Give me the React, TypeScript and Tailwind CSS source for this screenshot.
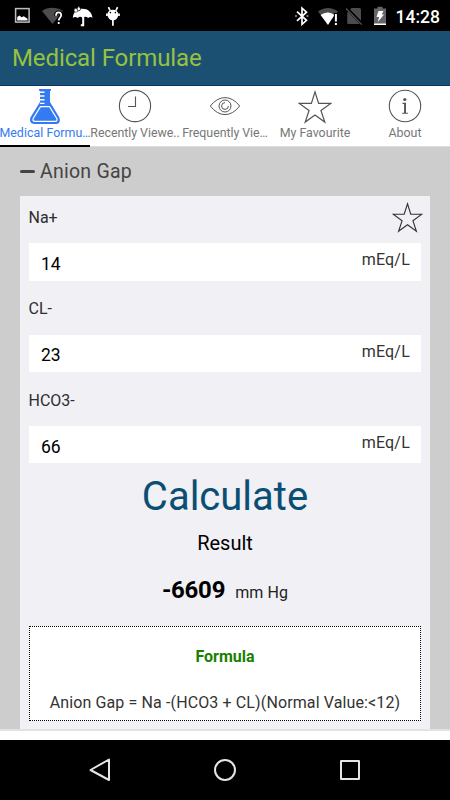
import React from "react";

const STAR = "M16 1.8 L19.4 12.6 H30.8 L21.6 19.3 L25.2 30.2 L16 23.5 L6.8 30.2 L10.4 19.3 L1.2 12.6 H12.6 Z";

function StatusBar() {
  return (
    <div className="flex h-[31px] shrink-0 items-center bg-black">
      <svg className="ml-[14px] h-[17px] w-[17px]" viewBox="0 0 17 17">
        <rect x="1.6" y="1.6" width="13.5" height="13.5" fill="none" stroke="#bdbdbd" strokeWidth="1.5" />
        <path d="M3.2 13.5V10L5.5 8.5L7.5 10.2L9.8 9.3L13.5 11.7V13.5Z" fill="#fff" />
      </svg>
      <svg className="ml-[10px] mt-[1px] h-[20px] w-[23px]" viewBox="0 0 23 20">
        <path d="M1 5C7 .8 15 .8 22 5L11.5 18Z" fill="#4c4c4c" />
        <path d="M15 9.7C15 5.3 20.4 5.5 20.2 9.2C20 11.6 17.7 12 17.7 14.5" fill="none" stroke="#000" strokeWidth="4" />
        <path d="M15 9.7C15 5.3 20.4 5.5 20.2 9.2C20 11.6 17.7 12 17.7 14.5M17.7 16V18" fill="none" stroke="#fff" strokeWidth="1.8" />
      </svg>
      <svg className="ml-[8px] h-[22px] w-[22px]" viewBox="0 0 22 22">
        <path d="M.8 13C1.2 6.2 6 3.7 10.5 3.7C15.8 3.7 20 7 20.5 13Q18.7 10.8 16.2 13Q13.4 10.7 10.7 13Q8 10.7 5.6 13Q3 10.8 .8 13Z" fill="#fff" />
        <path d="M11.2 11.5V20.2H8.8" fill="none" stroke="#fff" strokeWidth="2" />
        <circle cx="4" cy="5.2" r="2" fill="#fff" stroke="#000" strokeWidth=".5" />
        <path d="M6.8 .8L8.5 3.8Q8.5 5.8 6.8 5.8Q5 5.8 5 3.8Z" fill="#fff" stroke="#000" strokeWidth=".7" />
      </svg>
      <svg className="ml-[11px] h-[20px] w-[16px]" viewBox="0 0 16 20">
        <path d="M2.4 8A5.6 5.2 0 0 1 13.4 8V9Q12.5 14 7.9 14.6Q3.3 14 2.4 9Z" fill="#fff" />
        <path d="M3.5 1.2L5 4.5M12.5 1.2L11 4.5M1.9 7.5V10M14 7.5V10M7.9 14V19.8" stroke="#fff" strokeWidth="1.7" />
        <circle cx="5.4" cy="6.6" r=".8" /><circle cx="10.4" cy="6.6" r=".8" />
      </svg>
      <svg className="ml-auto h-[20px] w-[14px]" viewBox="0 0 14 20">
        <path d="M2 5.7L11.5 14.3L7 18.3V2.1L11.5 6.2L2 14.8" fill="none" stroke="#fff" strokeWidth="1.7" />
        <path d="M0 10H2M11.5 10H13.5" stroke="#999" strokeWidth="1.3" />
      </svg>
      <svg className="ml-[7.5px] h-[20px] w-[22px]" viewBox="0 0 22 20">
        <path d="M1 5.6C7 .9 15 .9 21 5.6L11 18Z" fill="#4c4c4c" />
        <path d="M3.6 9C8 5.6 14 5.6 17.3 9L11 19Z" fill="#fff" />
        <path d="M18.9 7V20" stroke="#000" strokeWidth="4" />
        <path d="M18.9 8V15.5M18.9 17V19" stroke="#fff" strokeWidth="2" />
      </svg>
      <svg className="ml-[7px] h-[20px] w-[17px]" viewBox="0 0 17 20">
        <path d="M1.2 6.5L5.5 2H13.5Q15 2 15 3.5V16.8Q15 18 13.5 18H2.5Q1.2 18 1.2 16.8Z" fill="#4c4c4c" />
        <path d="M.8 2.4L16.5 18.4" stroke="#000" strokeWidth="3.2" />
        <path d="M0 2.4L15.8 18.6" stroke="#555" strokeWidth="1.2" />
      </svg>
      <svg className="ml-[10px] h-[20px] w-[14px]" viewBox="0 0 14 20">
        <path d="M1 2.5H4.5V.8H9.5V2.5H13V19H1Z" fill="#666" />
        <path d="M1 17.5H13V19H1Z" fill="#fff" />
        <path d="M5.5 5H10.5L8.7 8.5H11L4.8 16L6.1 11H3.5Z" fill="#fff" />
      </svg>
      <span className="ml-[9px] mr-[10px] pt-[2px] text-[17.5px] font-medium leading-5 text-white">14:28</span>
    </div>
  );
}

function FlaskIcon() {
  return (
    <svg className="h-9 w-8" viewBox="0 0 32 36">
      <path d="M10 1H22V2.8H21V14L30.4 29.5Q32.2 35.5 27 36H5Q-.2 35.5 1.4 29.5L11 14V2.8H10Z" fill="#347bf3" />
      <path d="M11 4.3H15.5M11 8H15.5M11 11.7H15.5M11 15.4H15.5" stroke="#fff" strokeWidth="1.4" />
      <path d="M11.5 18.6H20.5L27.8 30.5Q28.8 33.3 26 33.3H6Q3.2 33.3 4.2 30.5Z" fill="none" stroke="#fff" strokeWidth="1.2" />
    </svg>
  );
}

function ClockIcon() {
  return (
    <svg className="h-9 w-9" viewBox="0 0 36 36" fill="none" stroke="#555" strokeWidth="1.1">
      <circle cx="18" cy="18" r="15.6" />
      <path d="M18.5 8.5V18.5H11" stroke="#555" />
    </svg>
  );
}

function EyeIcon() {
  return (
    <svg className="h-9 w-9" viewBox="0 0 36 36" fill="none" stroke="#555" strokeWidth="1">
      <path d="M3.3 18Q10 9.6 18 9.6T32.7 18Q26 26.6 18 26.6T3.3 18Z" />
      <circle cx="18" cy="18" r="6" />
      <path d="M18 14.6A3.4 3.4 0 1 0 21.4 18" />
    </svg>
  );
}

function InfoIcon() {
  return (
    <svg className="h-9 w-9" viewBox="0 0 36 36" fill="none" stroke="#555" strokeWidth="1.1">
      <circle cx="18" cy="18" r="15.7" />
      <circle cx="17.8" cy="11.5" r="1.6" fill="#555" stroke="none" />
      <path d="M15.5 15.4H18.3V25M15.2 25.2H20.9" />
      <path d="M18 15V25" strokeWidth="1.8" />
    </svg>
  );
}

function StarIcon({ className, color }: { className: string; color: string }) {
  return (
    <svg className={className} viewBox="0 0 32 32" fill="none" stroke={color} strokeWidth="1.15">
      <path d={STAR} />
    </svg>
  );
}

const tabs = [
  { label: "Medical Formu…", icon: <FlaskIcon />, style: "text-[#347bf3] tracking-[0.04px]" },
  { label: "Recently Viewe..", icon: <ClockIcon />, style: "text-[#777] tracking-[-0.04px]" },
  { label: "Frequently Vie…", icon: <EyeIcon />, style: "text-[#777] tracking-[-0.05px]" },
  { label: "My Favourite", icon: <StarIcon className="mt-[2px] h-[34px] w-[34px]" color="#555" />, style: "text-[#777] tracking-[0px]" },
  { label: "About", icon: <InfoIcon />, style: "text-[#777] tracking-[0px]" },
];

function Tabs() {
  return (
    <div className="grid h-[61px] shrink-0 grid-cols-5 border-b border-[#ddd] bg-white">
      {tabs.map((tab, i) => (
        <div key={tab.label} className={"flex h-[61px] min-w-0 flex-col items-center border-b-2 pt-[2px] " + (i === 0 ? "border-black" : "border-transparent")}>
          <div className="flex h-9 items-start justify-center">{tab.icon}</div>
          <span className={"whitespace-nowrap pt-[1px] text-[12.4px] leading-[16px] " + tab.style}>{tab.label}</span>
        </div>
      ))}
    </div>
  );
}

function Field({ label, value, star }: { label: string; value: string; star?: boolean }) {
  return (
    <div className="h-[91.4px]">
      <div className="flex h-[47.3px] justify-between">
        <span className="ml-[-0.5px] pt-[11px] text-[16px] leading-[22px] text-[#2d2d2d]">{label}</span>
        {star && <StarIcon className="mr-[-1.5px] mt-[6px] h-[31px] w-[31px]" color="#333" />}
      </div>
      <div className="flex h-[37.4px] items-start justify-between bg-white pl-[12px] pr-[11px]">
        <span className="pt-[9.5px] text-[17.5px] leading-[22px] text-black">{value}</span>
        <span className="pt-[6px] text-[16px] leading-[22px] tracking-[0.2px] text-[#333]">mEq/L</span>
      </div>
    </div>
  );
}

export default function App() {
  return (
    <div className="flex h-[800px] w-[450px] flex-col overflow-hidden bg-white font-[Roboto,sans-serif]">
      <StatusBar />
      <header className="flex h-[55px] shrink-0 items-center border-b border-[#093566] bg-[#1c5073] pl-[12px]">
        <h1 className="mt-[-1px] text-[24px] leading-[30px] tracking-[-0.1px] text-[#97c23c]">Medical Formulae</h1>
      </header>
      <Tabs />
      <main className="flex h-[582px] shrink-0 flex-col bg-[#cdcdcd] px-5">
        <div className="flex h-[49px] shrink-0 items-center">
          <div className="h-[2.5px] w-[15px] rounded-sm bg-[#444]" />
          <h2 className="ml-[5px] mt-[1px] text-[19.5px] leading-6 tracking-[0.25px] text-[#444]">Anion Gap</h2>
        </div>
        <section className="flex h-[533px] flex-col bg-[#f0f0f5] px-[9px]">
          <Field label="Na+" value="14" star />
          <Field label="CL-" value="23" />
          <Field label="HCO3-" value="66" />
          <div className="mt-[1.5px] text-center text-[40px] leading-[50px] text-[#0b4e74]">Calculate</div>
          <div className="mt-[9.5px] text-center text-[20px] leading-[24px] text-black">Result</div>
          <div className="mt-[21px] flex h-[28px] items-baseline justify-center gap-[10px] leading-[28px] text-black">
            <span className="text-[24px] font-bold tracking-[-0.25px]">-6609</span>
            <span className="text-[16px] tracking-[0.1px] text-[#222]">mm Hg</span>
          </div>
          <div className="mt-[21.5px] h-[95px] border border-dotted border-black bg-white text-center">
            <div className="mt-[18px] text-[16px] font-bold leading-[24px] text-[#198000]">Formula</div>
            <div className="mt-[22px] whitespace-nowrap text-[16px] leading-[24px] tracking-[0.12px] text-[#333]">Anion Gap = Na -(HCO3 + CL)(Normal Value:&lt;12)</div>
          </div>
        </section>
      </main>
      <div className="h-[11px] shrink-0 border-t-2 border-[#e2e2e2] bg-white" />
      <nav className="flex h-[60px] shrink-0 items-center justify-center gap-[101px] bg-black">
        <svg className="h-6 w-6" viewBox="0 0 24 24" fill="none" stroke="#e5e5e5" strokeWidth="2" strokeLinejoin="round">
          <path d="M21 1.5V22L2.5 12Z" />
        </svg>
        <svg className="h-6 w-6" viewBox="0 0 24 24" fill="none" stroke="#e5e5e5" strokeWidth="2">
          <circle cx="12" cy="12" r="10" />
        </svg>
        <svg className="h-6 w-6" viewBox="0 0 24 24" fill="none" stroke="#e5e5e5" strokeWidth="2" strokeLinejoin="round">
          <path d="M3 3H21V21H3Z" />
        </svg>
      </nav>
    </div>
  );
}
